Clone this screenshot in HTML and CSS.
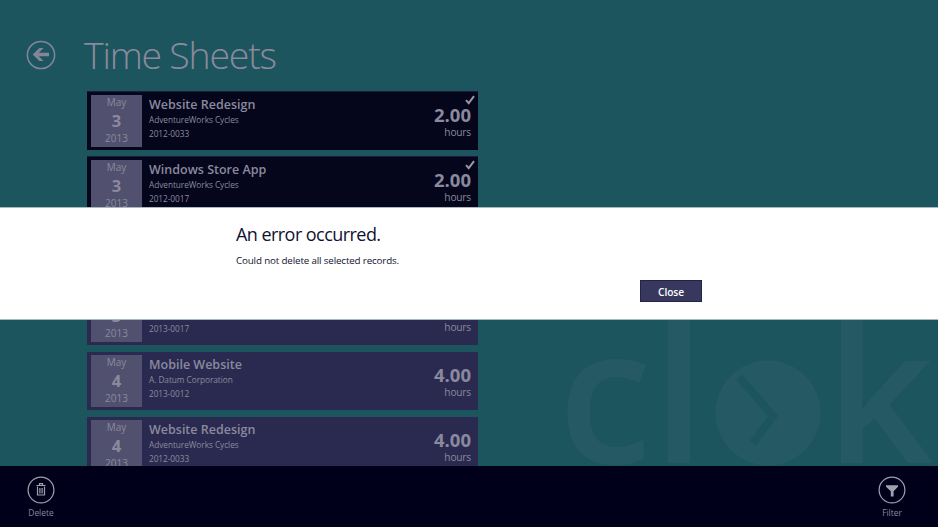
FILE: index.html
```html
<!DOCTYPE html>
<html lang="en">
<head>
<meta charset="utf-8">
<title>Time Sheets</title>
<link rel="stylesheet" href="styles.css">
</head>
<body>
<div class="app">
  <svg class="watermark" viewBox="0 0 378 160" width="378" height="160" aria-hidden="true">
    <text x="-2" y="153">c</text>
    <text x="92.5" y="153">l</text>
    <circle cx="208" cy="103" r="52.5"/>
    <path class="hands" d="M179 67 L213 106 L193 133" />
    <text x="265.5" y="153">k</text>
  </svg>
  <header class="header">
    <svg class="back" viewBox="0 0 30 30" width="30" height="30"><circle cx="15" cy="15" r="13.6"/><path d="M6.7 14.5 L13.4 8 H17.6 L12.8 12.8 H23 V16.2 H12.8 L17.6 21 H13.4Z"/></svg>
    <h1>Time Sheets</h1>
  </header>
  <main class="list">
    <article class="card selected">
      <div class="date"><span>May</span><b>3</b><span>2013</span></div>
      <div class="info"><h2>Website Redesign</h2><p>AdventureWorks Cycles</p><p class="code">2012-0033</p></div>
      <div class="time"><b>2.00</b><span>hours</span></div>
      <svg class="check" viewBox="0 0 10 10" width="10" height="10"><path d="M1 5.2 L3.7 8.2 L9 1.2"/></svg>
    </article>
    <article class="card selected">
      <div class="date"><span>May</span><b>3</b><span>2013</span></div>
      <div class="info"><h2>Windows Store App</h2><p>AdventureWorks Cycles</p><p class="code">2012-0017</p></div>
      <div class="time"><b>2.00</b><span>hours</span></div>
      <svg class="check" viewBox="0 0 10 10" width="10" height="10"><path d="M1 5.2 L3.7 8.2 L9 1.2"/></svg>
    </article>
    <article class="card"></article>
    <article class="card">
      <div class="date"><span>May</span><b>3</b><span>2013</span></div>
      <div class="info"><h2></h2><p></p><p class="code">2013-0017</p></div>
      <div class="time"><b></b><span>hours</span></div>
    </article>
    <article class="card">
      <div class="date"><span>May</span><b>4</b><span>2013</span></div>
      <div class="info"><h2>Mobile Website</h2><p>A. Datum Corporation</p><p class="code">2013-0012</p></div>
      <div class="time"><b>4.00</b><span>hours</span></div>
    </article>
    <article class="card">
      <div class="date"><span>May</span><b>4</b><span>2013</span></div>
      <div class="info"><h2>Website Redesign</h2><p>AdventureWorks Cycles</p><p class="code">2012-0033</p></div>
      <div class="time"><b>4.00</b><span>hours</span></div>
    </article>
  </main>
  <section class="dialog" role="alertdialog">
    <div class="dialog-body">
      <h2>An error occurred.</h2>
      <p>Could not delete all selected records.</p>
      <button>Close</button>
    </div>
  </section>
  <footer class="appbar">
    <div class="command">
      <svg viewBox="0 0 28 28" width="28" height="28"><circle cx="14" cy="14" r="12.9"/><path d="M9.5 9.5 H18.5 M12.5 9 V7.7 H15.5 V9 M10.5 10.5 V19 H17.5 V10.5 M12.9 12 V17.5 M15.1 12 V17.5"/></svg>
      <span>Delete</span>
    </div>
    <div class="command">
      <svg viewBox="0 0 28 28" width="28" height="28"><circle cx="14" cy="14" r="12.9"/><path class="solid" d="M8 9.3 H20 V10.8 L15.6 15.2 V20.5 H12.8 V15.2 L8 10.8Z"/></svg>
      <span>Filter</span>
    </div>
  </footer>
</div>
</body>
</html>
```
FILE: styles.css
```css
* { box-sizing: border-box; margin: 0; padding: 0; }

body {
  width: 938px;
  height: 527px;
  overflow: hidden;
  background: #1d555f;
  color: #8a8a9c;
  font-family: "Open Sans", "Noto Sans", sans-serif;
}

.app { position: relative; width: 938px; height: 527px; overflow: hidden; }

.watermark { position: absolute; left: 560px; top: 310px; fill: #255a64; }
.watermark text { font-size: 189px; font-weight: 600; }
.watermark .hands { fill: none; stroke: #1d555f; stroke-width: 8; }

.header { display: flex; height: 92px; padding-left: 26px; }
.back { margin-top: 40px; }
.back circle { fill: none; stroke: #85859a; stroke-width: 1.5; }
.back path { fill: #85859a; }
h1 {
  margin: 29px 0 0 28px;
  font-size: 37.5px;
  line-height: 52px;
  font-weight: 300;
  letter-spacing: -1.25px;
  white-space: nowrap;
}

.list { display: flex; flex-direction: column; gap: 7px; width: 391px; margin-left: 87px; }
.card {
  position: relative;
  display: flex;
  flex: none;
  height: 58px;
  padding: 3px 7px 3px 4px;
  background: #2a2950;
}
.selected { background: #05051c; box-shadow: 0 -1px #1c1c40; }

.date {
  display: flex;
  flex-direction: column;
  align-items: center;
  width: 51px;
  height: 52px;
  background: #51516f;
  font-size: 10px;
  line-height: 15px;
}
.date b { font-size: 16.5px; line-height: 21px; }

.info { flex: 1; padding-left: 7px; white-space: nowrap; }
.info h2 { height: 18px; font-size: 12.5px; line-height: 20px; font-weight: 600; }
.info p { height: 14px; font-size: 8.3px; line-height: 13.6px; letter-spacing: -0.06px; }

.time { display: flex; flex-direction: column; align-items: flex-end; padding-top: 10px; }
.time b { height: 20px; font-size: 18.5px; line-height: 20px; }
.time span { font-size: 10.2px; line-height: 14px; letter-spacing: -0.2px; }
.check { position: absolute; right: 3px; top: 3px; fill: none; stroke: #9898a8; stroke-width: 2; }

.dialog {
  position: absolute;
  left: 0;
  top: 207px;
  width: 938px;
  height: 113px;
  padding: 0 236px;
  background: #fff;
  border-top: 1px solid #aab8bf;
  border-bottom: 1px solid #aab8bf;
  color: #11112f;
}
.dialog-body { display: flex; flex-direction: column; }
.dialog h2 { margin-top: 13px; font-size: 18px; line-height: 26px; font-weight: 400; letter-spacing: -0.55px; }
.dialog p { margin-top: 7px; font-size: 9.8px; line-height: 14px; letter-spacing: -0.15px; }
.dialog button {
  align-self: flex-end;
  width: 62px;
  height: 22px;
  margin-top: 12px;
  border: 1px solid #22224a;
  background: #38385f;
  color: #fff;
  font: 600 10.2px/22px "Open Sans", sans-serif;
  letter-spacing: -0.1px;
}

.appbar {
  position: absolute;
  left: 0;
  top: 466px;
  width: 938px;
  height: 61px;
  display: flex;
  justify-content: space-between;
  padding: 10px 21px 0 16px;
  background: #00001a;
}
.command { display: flex; flex-direction: column; align-items: center; width: 50px; }
.command svg { fill: none; stroke: #a0a0b0; stroke-width: 1.2; }
.command .solid { fill: #a0a0b0; stroke: none; }
.command span { margin-top: 2px; font-size: 8.4px; line-height: 13px; }
```
